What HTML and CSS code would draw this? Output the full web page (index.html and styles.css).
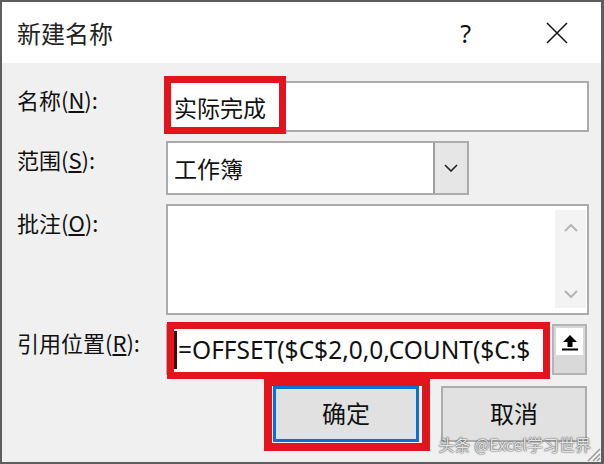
FILE: index.html
```html
<!DOCTYPE html>
<html lang="zh-CN">
<head>
    <meta charset="UTF-8">
    <title>新建名称</title>
    <link rel="stylesheet" href="styles.css">
</head>
<body>
    <div class="dialog">

        <!-- 标题栏 -->
        <div class="titlebar">
            <span class="title">新建名称</span>
            <span class="help">?</span>
            <span class="close">
                <svg width="22" height="22" viewBox="0 0 22 22"><path d="M1 1 L21 21 M21 1 L1 21" stroke="#111" stroke-width="1.5" fill="none"/></svg>
            </span>
        </div>

        <div class="content">
            <div class="form">
                <label class="lbl">名称(<u>N</u>):</label>
                <div class="field name-field">
                    <span class="txt">实际完成</span>
                    <span class="mark mark-name"></span>
                </div>

                <label class="lbl">范围(<u>S</u>):</label>
                <div class="combo">
                    <span class="txt">工作簿</span>
                    <span class="combo-btn">
                        <svg width="14" height="8" viewBox="0 0 14 8"><path d="M1 1 L7 7 L13 1" stroke="#222" stroke-width="1.6" fill="none"/></svg>
                    </span>
                </div>

                <label class="lbl">批注(<u>O</u>):</label>
                <div class="memo">
                    <div class="scroll">
                        <svg width="14" height="8" viewBox="0 0 14 8"><path d="M1 7 L7 1 L13 7" stroke="#b4b4b4" stroke-width="2" fill="none"/></svg>
                        <svg width="14" height="8" viewBox="0 0 14 8"><path d="M1 1 L7 7 L13 1" stroke="#b4b4b4" stroke-width="2" fill="none"/></svg>
                    </div>
                </div>

                <label class="lbl">引用位置(<u>R</u>):</label>
                <div class="ref-row">
                    <div class="field ref-field">
                        <span class="caret"></span>
                        <span class="formula">=OFFSET($C$2,0,0,COUNT($C:$</span>
                        <span class="mark mark-ref"></span>
                    </div>
                    <div class="ref-btn">
                        <span class="ref-icon">
                            <svg width="18" height="17" viewBox="0 0 18 17"><path d="M9 1 L16 8 L11.5 8 L11.5 13 L6.5 13 L6.5 8 L2 8 Z" fill="#000"/><rect x="1" y="14.5" width="16" height="2" fill="#000"/></svg>
                        </span>
                    </div>
                </div>
            </div>

            <div class="buttons">
                <div class="btn btn-ok">确定<span class="mark mark-ok"></span></div>
                <div class="btn">取消</div>
            </div>
        </div>

        <div class="watermark">头条 @Excel学习世界</div>
        <svg class="grip" width="16" height="16" viewBox="0 0 16 16"><path d="M15 3 L3 15 M15 8 L8 15 M15 12 L12 15" stroke="#9a9a9a" stroke-width="1.5"/></svg>
    </div>
</body>
</html>
```

FILE: styles.css
```css
/* 전체 대화 상자 */
body {
    margin: 0;
    font-family: "Noto Sans", "Noto Sans CJK SC", sans-serif;
    color: #111;
}

.dialog {
    position: relative;
    width: 604px;
    height: 464px;
    box-sizing: border-box;
    border: 2px solid #5e5e5e;
    border-right-width: 3px;
    background-color: #f0f0f0;
    overflow: hidden;
}

/* 标题栏 */
.titlebar {
    display: flex;
    align-items: center;
    height: 61px;
    background-color: #fff;
    padding-left: 15px;
    font-family: "Noto Sans CJK SC", sans-serif;
}

.title {
    font-size: 24px;
    flex: 1;
    color: #222;
}

.help {
    font-size: 25px;
    margin-right: 75px;
    font-family: "Noto Sans", sans-serif;
}

.close {
    display: flex;
    margin-right: 33px;
}

.content {
    padding: 18px 12px 0 15px;
}

/* 表单 */
.form {
    display: grid;
    grid-template-columns: 149px 1fr;
    row-gap: 9px;
}

.lbl {
    font-family: "Noto Sans CJK SC", sans-serif;
    font-size: 22px;
    line-height: 1;
    padding-top: 7px;
}

.lbl u {
    text-underline-offset: 2px;
}

.field {
    position: relative;
    display: flex;
    align-items: center;
    background-color: #fff;
    border: 2px solid #ababab;
    box-sizing: border-box;
}

.name-field {
    height: 51px;
}

.txt {
    font-family: "Noto Sans CJK SC", sans-serif;
    font-size: 23px;
    padding-left: 6px;
}

.combo {
    display: flex;
    width: 303px;
    height: 54px;
    box-sizing: border-box;
    border: 2px solid #ababab;
    background-color: #fff;
    align-items: center;
}

.combo .txt {
    flex: 1;
    padding-left: 6px;
}

.combo-btn {
    display: flex;
    align-items: center;
    justify-content: center;
    width: 32px;
    height: 100%;
    background-color: #e6e6e6;
    border-left: 2px solid #a0a0a0;
}

.memo {
    display: flex;
    justify-content: flex-end;
    height: 111px;
    box-sizing: border-box;
    border: 2px solid #ababab;
    background-color: #fff;
    padding: 4px 1px 5px 0;
}

.scroll {
    display: flex;
    flex-direction: column;
    justify-content: space-between;
    align-items: center;
    width: 31px;
    padding: 14px 0 10px;
    box-sizing: border-box;
    background-color: #f3f3f3;
}

/* 引用位置 */
.ref-row {
    display: flex;
    gap: 2px;
    padding-right: 2px;
}

.ref-field {
    flex: 1;
    height: 51px;
}

.caret {
    width: 3px;
    height: 38px;
    background-color: #3a0a0a;
    margin-left: 6px;
}

.formula {
    font-size: 24.5px;
    margin-left: 1px;
    color: #111;
}

.ref-btn {
    width: 35px;
    height: 51px;
    box-sizing: border-box;
    border: 2px solid #b4b4b4;
    background-color: #d9d9d9;
    padding: 2px 2px 18px;
}

.ref-icon {
    display: flex;
    align-items: flex-end;
    justify-content: center;
    height: 100%;
    background-color: #fff;
    padding-bottom: 4px;
    box-sizing: border-box;
}

/* 按钮 */
.buttons {
    display: flex;
    justify-content: flex-end;
    gap: 22px;
    margin-top: 11px;
    padding-right: 2px;
}

.btn {
    position: relative;
    display: flex;
    align-items: center;
    justify-content: center;
    width: 146px;
    height: 56px;
    box-sizing: border-box;
    border: 2px solid #adadad;
    background-color: #e1e1e1;
    font-family: "Noto Sans CJK SC", sans-serif;
    font-size: 24px;
    line-height: 1;
    padding-bottom: 2px;
}

.btn-ok {
    border: 3px solid #0a6fd8;
}

/* 红色标注框 */
.mark {
    position: absolute;
    border: 7px solid #e3141c;
    box-sizing: border-box;
}

.mark-name {
    left: -4px;
    top: -7px;
    width: 122px;
    height: 58px;
}

.mark-ref {
    left: -1px;
    top: -4px;
    width: 383px;
    height: 57px;
}

.mark-ok {
    left: -12px;
    top: -11px;
    width: 166px;
    height: 73px;
    border-width: 8px;
}

/* 水印 */
.watermark {
    position: absolute;
    right: 10px;
    bottom: 10px;
    font-family: "Noto Sans CJK SC", sans-serif;
    font-size: 16px;
    line-height: 1;
    color: rgba(255, 255, 255, 0.85);
    text-shadow: 0 0 2px #555, 0 0 1px #333;
}

.grip {
    position: absolute;
    right: 0;
    bottom: 0;
}
```
